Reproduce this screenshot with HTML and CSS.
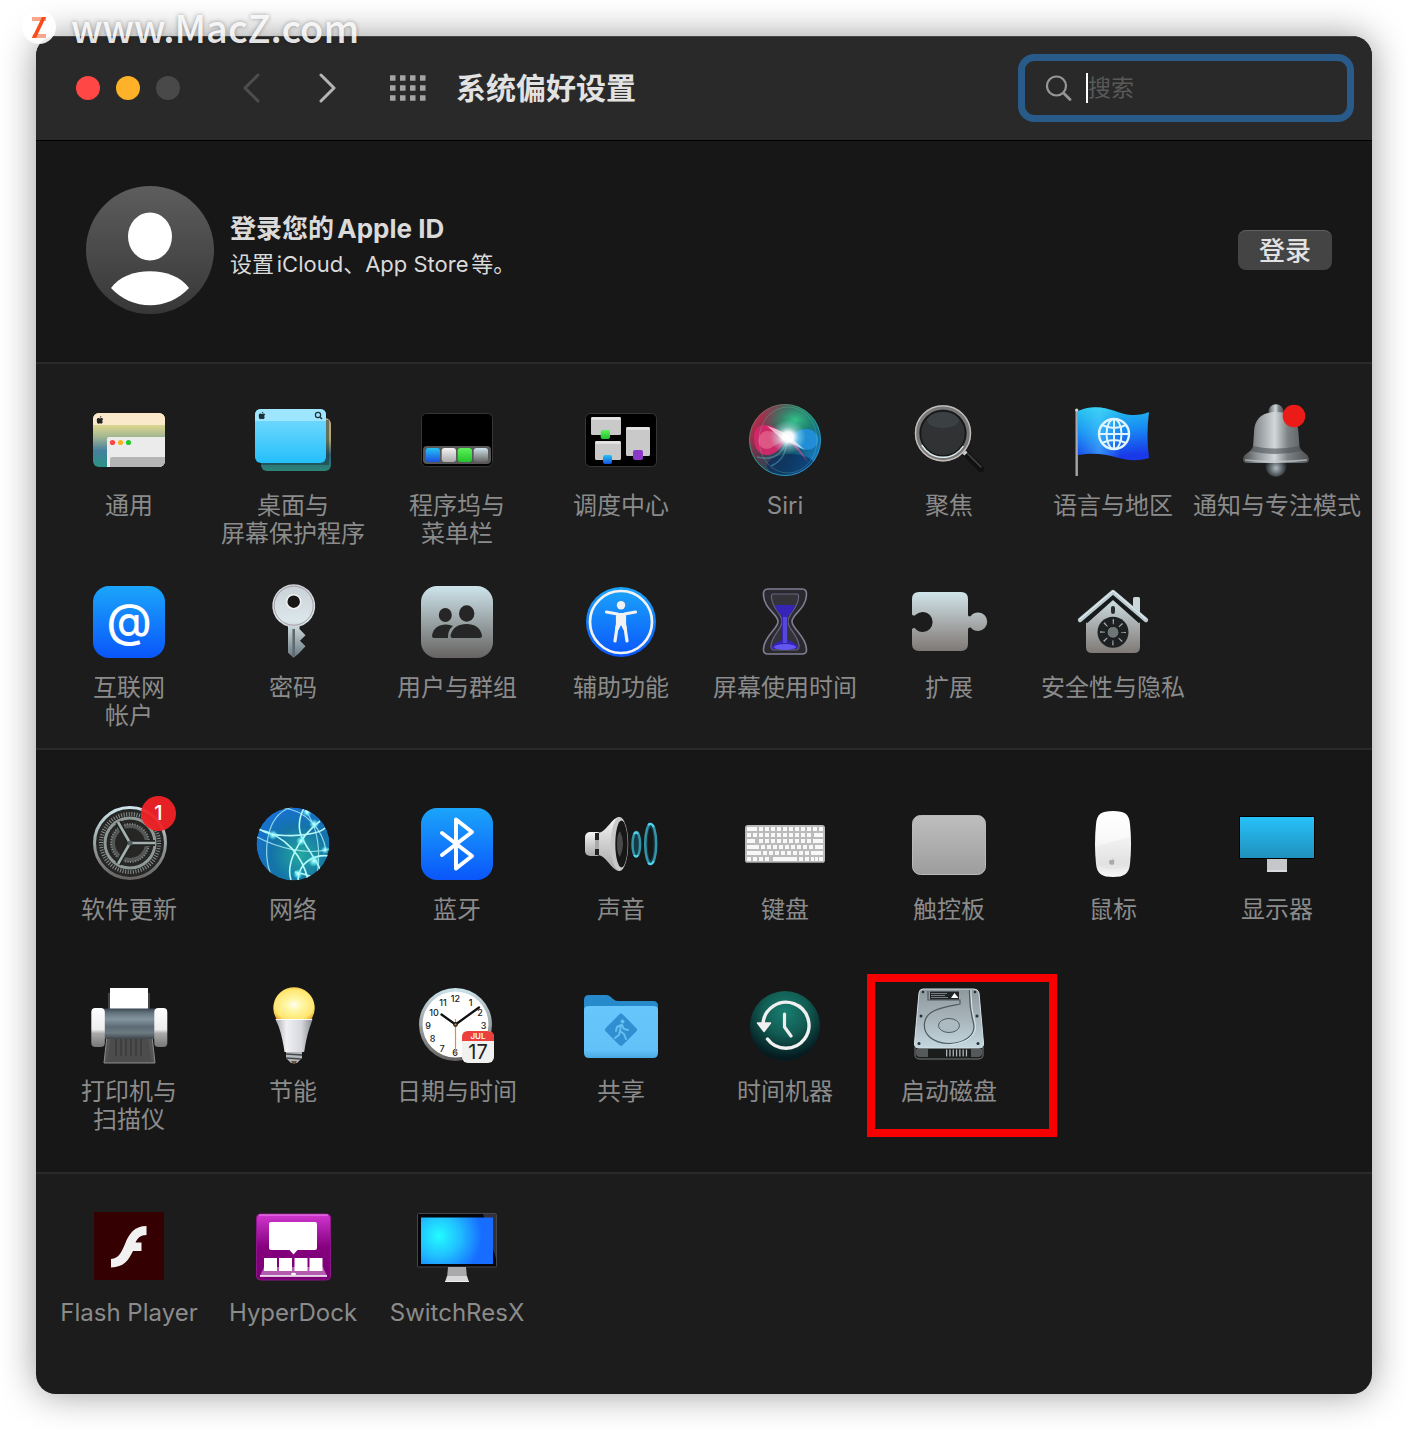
FILE: index.html
```html
<!DOCTYPE html>
<html lang="zh-CN">
<head>
<meta charset="utf-8">
<meta name="viewport" content="width=device-width, initial-scale=1">
<title>系统偏好设置</title>
<link rel="stylesheet" href="styles.css">
</head>
<body>
<svg class="defs" aria-hidden="true">
  <defs>
    <linearGradient id="blue" x1="0" y1="0" x2="0" y2="1"><stop offset="0" stop-color="#1ba5fa"/><stop offset="1" stop-color="#0a56fb"/></linearGradient>
    <linearGradient id="steel" x1="0" y1="0" x2="0" y2="1"><stop offset="0" stop-color="#cde4ec"/><stop offset=".5" stop-color="#9aa3a5"/><stop offset="1" stop-color="#666362"/></linearGradient>
    <linearGradient id="silver" x1="0" y1="0" x2="0" y2="1"><stop offset="0" stop-color="#f5f5f5"/><stop offset="1" stop-color="#a9a9a9"/></linearGradient>
    <linearGradient id="sand" x1="0" y1="0" x2="0" y2="1"><stop offset="0" stop-color="#e9dba6"/><stop offset=".25" stop-color="#d6d38f"/><stop offset=".45" stop-color="#9fb592"/><stop offset=".7" stop-color="#457f9f"/><stop offset="1" stop-color="#2b9384"/></linearGradient>
    <linearGradient id="green" x1="0" y1="0" x2="0" y2="1"><stop offset="0" stop-color="#5df25a"/><stop offset="1" stop-color="#22c32c"/></linearGradient>
    <linearGradient id="azure" x1="0" y1="0" x2="0" y2="1"><stop offset="0" stop-color="#23c4f6"/><stop offset="1" stop-color="#1b4fe0"/></linearGradient>
    <symbol id="apple" viewBox="0 0 16 18"><path d="M11 0c.2 2-1.500 3.900-3.300 3.900C7.400 2 9.200.2 11 0zM14.500 13.800c-1 1.900-2.100 3.700-3.600 3.700-1.300 0-1.700-.8-3.200-.8s-2 .8-3.200.8C2.300 17.500.3 13.300.3 10c0-3.400 2-5.400 4.200-5.400 1.400 0 2.400.9 3.400.9 1 0 2.200-1 3.900-1 1 0 2.700.5 3.600 2-3 1.800-2.600 6 -.9 7.300z"/></symbol>
  </defs>
</svg>

<div class="watermark">
  <svg class="watermark-logo" viewBox="0 0 36 36" aria-hidden="true"><circle cx="18" cy="18" r="17" fill="#fff" fill-opacity=".9"/><path d="M11 8h14v4H11zM12 25h13v4H11z" fill="#f9a58c"/><path d="M21 8h4l-10 21h-4z" fill="#fb4a18"/></svg>
  <span>www.MacZ.com</span>
</div>

<main class="window">
  <header class="titlebar">
    <div class="lights">
      <button class="light close" aria-label="关闭"></button>
      <button class="light minimize" aria-label="最小化"></button>
      <button class="light zoom" aria-label="缩放" disabled></button>
    </div>
    <nav class="history">
      <button class="tool" aria-label="后退" disabled><svg width="18" height="30" viewBox="0 0 18 30"><path d="M16 2 3 15l13 13" fill="none" stroke="#4d4d4d" stroke-width="3" stroke-linecap="round" stroke-linejoin="round"/></svg></button>
      <button class="tool" aria-label="前进"><svg width="18" height="30" viewBox="0 0 18 30"><path d="m3 2 13 13L3 28" fill="none" stroke="#b4b4b4" stroke-width="3" stroke-linecap="round" stroke-linejoin="round"/></svg></button>
    </nav>
    <button class="tool" aria-label="全部显示"><svg width="36" height="28" viewBox="0 0 36 28"><g fill="none" stroke="#a4a4a4" stroke-width="5.500" stroke-dasharray="5.500 4.500"><path d="M0 4h36M0 14h36M0 24h36"/></g></svg></button>
    <h1 class="title">系统偏好设置</h1>
    <label class="search">
      <svg width="28" height="28" viewBox="0 0 28 28" aria-hidden="true"><circle cx="11.500" cy="12" r="9.500" fill="none" stroke="#969696" stroke-width="2.200"/><path d="m18.500 19 6.500 6.500" stroke="#969696" stroke-width="2.800" stroke-linecap="round"/></svg>
      <span class="caret"></span>
      <input type="search" placeholder="搜索" aria-label="搜索">
    </label>
  </header>

  <section class="account">
    <svg class="avatar" viewBox="0 0 128 128" aria-hidden="true"><defs><linearGradient id="av" x1="0" y1="0" x2="0" y2="1"><stop offset="0" stop-color="#5d5d5d"/><stop offset="1" stop-color="#373737"/></linearGradient></defs><circle cx="64" cy="64" r="64" fill="url(#av)"/><ellipse cx="64" cy="50.500" rx="22" ry="24" fill="#fff"/><path d="M25 102C40 79.500 88 79.500 103 102C82 125 46 125 25 102z" fill="#fff"/></svg>
    <div class="account-text">
      <h2>登录您的Apple ID</h2>
      <p>设置iCloud、App Store等。</p>
    </div>
    <button class="login">登录</button>
  </section>

  <section class="panes personal">
    <button class="pane">
      <svg class="icon" viewBox="0 0 80 80"><clipPath id="gc"><rect x="4" y="13" width="72" height="54" rx="6"/></clipPath><g clip-path="url(#gc)"><path d="M4 13h72v54H4z" fill="url(#sand)"/><path d="M4 13h72v12H4z" fill="#fae9cb"/><path d="M18 69V39q0-2 2-2h57v32z" fill="#ebebeb"/><path d="M21 69V59q0-2 2-2h54v12z" fill="#b5b5b5"/></g><use href="#apple" x="7.500" y="16" width="7" height="8" fill="#222"/><circle cx="23.500" cy="42.500" r="2.600" fill="#fd4744"/><circle cx="31.500" cy="42.500" r="2.600" fill="#fdb024"/><circle cx="39.500" cy="42.500" r="2.600" fill="#29c833"/></svg>
      <span class="label">通用</span>
    </button>
    <button class="pane">
      <svg class="icon" viewBox="0 0 80 80"><defs><linearGradient id="sky" x1="0" y1="0" x2="0" y2="1"><stop offset="0" stop-color="#7fddff"/><stop offset="1" stop-color="#25bffa"/></linearGradient><linearGradient id="dk" x1="0" y1="0" x2="0" y2="1"><stop offset="0" stop-color="#c0a77e"/><stop offset=".4" stop-color="#b3a66a"/><stop offset=".7" stop-color="#315e73"/><stop offset="1" stop-color="#2c8577"/></linearGradient></defs><rect x="8" y="18" width="70" height="53" rx="6" fill="url(#dk)"/><path d="M8 63h66V20" fill="none" stroke="#143b44" stroke-opacity=".5" stroke-width="4"/><rect x="2" y="9" width="71" height="54" rx="6" fill="url(#sky)"/><path d="M2 21v-6q0-6 6-6h59q6 0 6 6v6z" fill="#9ee5ff"/><use href="#apple" x="5.500" y="11.500" width="7" height="8" fill="#1b3139"/><circle cx="65" cy="15" r="2.600" fill="none" stroke="#1b3139" stroke-width="1.200"/><path d="m67 17 2 2" stroke="#1b3139" stroke-width="1.400"/></svg>
      <span class="label">桌面与<br>屏幕保护程序</span>
    </button>
    <button class="pane">
      <svg class="icon" viewBox="0 0 80 80"><rect x="4.500" y="13.500" width="71" height="53" rx="5" fill="#000" stroke="#363636"/><rect x="6" y="46" width="68" height="18" rx="4" fill="#575757"/><rect x="8.700" y="48" width="14.300" height="14" rx="3" fill="url(#azure)"/><rect x="24.700" y="48" width="14.300" height="14" rx="3" fill="url(#silver)"/><rect x="40.700" y="48" width="14.300" height="14" rx="3" fill="url(#green)"/><rect x="56.700" y="48" width="14.300" height="14" rx="3" fill="url(#steel)"/></svg>
      <span class="label">程序坞与<br>菜单栏</span>
    </button>
    <button class="pane">
      <svg class="icon" viewBox="0 0 80 80"><rect x="4.500" y="13.500" width="71" height="53" rx="5" fill="#000" stroke="#363636"/><g fill="#c9c9c9"><rect x="10" y="17" width="30" height="18" rx="1.500"/><rect x="14" y="41" width="26" height="19" rx="1.500"/><rect x="45" y="27" width="24" height="29" rx="1.500"/></g><path d="M10.500 18.500h29M14.500 42.500h25M45.500 28.500h23" stroke="#e6e6e6" stroke-width="2.500"/><rect x="19.700" y="30" width="9.300" height="9" rx="2" fill="url(#green)"/><rect x="22" y="55" width="9" height="9" rx="2" fill="url(#azure)"/><rect x="52" y="50" width="10" height="10" rx="2" fill="#8a38c8"/></svg>
      <span class="label">调度中心</span>
    </button>
    <button class="pane">
      <svg class="icon" viewBox="0 0 80 80"><defs><radialGradient id="sr"><stop offset="0" stop-color="#fff"/><stop offset=".3" stop-color="#fff" stop-opacity=".95"/><stop offset=".6" stop-color="#cff" stop-opacity=".4"/><stop offset="1" stop-color="#9ff" stop-opacity="0"/></radialGradient><linearGradient id="sb" x1="0" y1=".2" x2="1" y2=".8"><stop offset="0" stop-color="#d5284e"/><stop offset=".35" stop-color="#4f3a4c"/><stop offset=".65" stop-color="#12556d"/><stop offset="1" stop-color="#1789dc"/></linearGradient><radialGradient id="sg" cx=".5" cy=".5" r=".5"><stop offset="0" stop-color="#35c28a"/><stop offset="1" stop-color="#1a9b6b" stop-opacity="0"/></radialGradient><linearGradient id="sedge" x1="0" y1="0" x2="1" y2="1"><stop offset="0" stop-color="#b23c50"/><stop offset=".4" stop-color="#2b9e79"/><stop offset="1" stop-color="#278df0"/></linearGradient><clipPath id="sc"><circle cx="40" cy="40" r="36"/></clipPath></defs><g clip-path="url(#sc)"><circle cx="40" cy="40" r="36" fill="url(#sb)"/><ellipse cx="50" cy="20" rx="34" ry="25" fill="url(#sg)"/><ellipse cx="46" cy="66" rx="24" ry="12" fill="#0b285a" opacity=".65"/><path d="M42 39C27 19 9 22 9 38s12 21 22 14c6-4 8-9 11-13z" fill="#d9276b" opacity=".9"/><path d="M42 39C29 29 16 28 14 38s7 14 15 8z" fill="#ee86a0" opacity=".5"/><path d="M42 39c10-12 28-14 31-1 1 13-15 18-31 1z" fill="#2491df" opacity=".9"/><path d="M12 57c20 5 27-7 30-18-1 13-4 22-16 27" fill="none" stroke="#62c5df" stroke-width="1.500" opacity=".4"/><path d="M44 41 63 62 49 41z" fill="#d84b91" opacity=".65"/><ellipse cx="43" cy="40" rx="29" ry="33" fill="none" stroke="#6fe1bb" stroke-opacity=".25"/><ellipse cx="43" cy="37" rx="18" ry="17" fill="url(#sr)"/><path d="M22 26Q36 30 44 36L60 50Q46 43 37 39z" fill="#fff" opacity=".6"/></g><circle cx="40" cy="40" r="35.500" fill="none" stroke="url(#sedge)"/></svg>
      <span class="label">Siri</span>
    </button>
    <button class="pane">
      <svg class="icon" viewBox="0 0 80 80"><path d="m58 55 14 14" stroke="#111" stroke-width="6.500" stroke-linecap="round"/><path d="m59 54 13 13" stroke="#444" stroke-width="1.600" stroke-linecap="round"/><path d="m53.500 50.500 3.500 3.500" stroke="#c5ccd3" stroke-width="4.500"/><circle cx="34" cy="33.300" r="26" fill="#303233"/><ellipse cx="34" cy="20" rx="16" ry="8" fill="#56646b" opacity=".3"/><circle cx="34" cy="33.300" r="26" fill="none" stroke="#777" stroke-width="4.500"/><circle cx="34" cy="33.300" r="27.500" fill="none" stroke="#c6c1bc" stroke-width="1.300"/><path d="M13 45A24 24 0 0 0 54 46" fill="none" stroke="#dce9ed" stroke-width="2"/><circle cx="34" cy="33.300" r="22.500" fill="none" stroke="#161818" stroke-width="1.500"/></svg>
      <span class="label">聚焦</span>
    </button>
    <button class="pane">
      <svg class="icon" viewBox="0 0 80 80"><defs><linearGradient id="fl" x1="0" y1="0" x2=".15" y2="1"><stop offset="0" stop-color="#28c9ee"/><stop offset=".5" stop-color="#188df3"/><stop offset="1" stop-color="#1938e8"/></linearGradient><linearGradient id="fs"><stop offset="0" stop-color="#58e2ff" stop-opacity="0"/><stop offset=".3" stop-color="#58e2ff" stop-opacity=".45"/><stop offset=".6" stop-color="#58e2ff" stop-opacity="0"/></linearGradient></defs><path d="M3.700 10v66" stroke="#aaa4a8" stroke-width="2.400"/><circle cx="3.700" cy="10" r="1.600" fill="#d8d4d8"/><path d="M5 11C28 1 43 14 58 15c7 .5 13-1 18-3-2 15-2 30 0 46-28 8-35-9-71-3z" fill="url(#fl)"/><path d="M5 11C28 1 43 14 58 15c7 .5 13-1 18-3-2 15-2 30 0 46-28 8-35-9-71-3z" fill="url(#fs)"/><g fill="none" stroke="#dff5ff" stroke-width="2"><circle cx="41" cy="34" r="15" stroke-width="2.400"/><ellipse cx="41" cy="34" rx="7.500" ry="15"/><path d="M41 19v30M26 34h30M29 25q12 6 24 0M29 43q12-6 24 0"/></g></svg>
      <span class="label">语言与地区</span>
    </button>
    <button class="pane">
      <svg class="icon" viewBox="0 0 80 80"><defs><linearGradient id="bl"><stop offset="0" stop-color="#4b4d4e"/><stop offset=".2" stop-color="#8a9093"/><stop offset=".48" stop-color="#d3d8da"/><stop offset=".68" stop-color="#7c8184"/><stop offset="1" stop-color="#505254"/></linearGradient><radialGradient id="cl" cx=".5" cy=".6" r=".5"><stop offset="0" stop-color="#aebac0"/><stop offset="1" stop-color="#22282b"/></radialGradient></defs><circle cx="39" cy="12" r="7.700" fill="url(#bl)"/><circle cx="39" cy="66" r="10.700" fill="url(#cl)"/><path d="M17 33c0-15 9-21 22-21s22 7 22.500 21l1 14c1 5 9 6 9.500 12q0 4-4 4H10q-4 0-4-4c.5-6 9-7 10-12z" fill="url(#bl)"/><path d="M16 46q22 5 46 0l3 5q-27 6-52 0z" fill="#4c5256" opacity=".6"/><path d="M8 60q31 3 62 0" fill="none" stroke="#c5cbce" stroke-width="1.300" opacity=".7"/><circle cx="57" cy="16" r="11.300" fill="#eb1b17"/></svg>
      <span class="label">通知与专注模式</span>
    </button>
    <button class="pane">
      <svg class="icon" viewBox="0 0 80 80"><rect x="4" y="4" width="72" height="72" rx="16" fill="url(#blue)"/><text x="40" y="55" class="at">@</text></svg>
      <span class="label">互联网<br>帐户</span>
    </button>
    <button class="pane">
      <svg class="icon" viewBox="0 0 80 80"><defs><linearGradient id="ky" x1="0" y1="0" x2="0" y2="1"><stop offset="0" stop-color="#c8d1d6"/><stop offset=".5" stop-color="#dce7eb"/><stop offset="1" stop-color="#65767d"/></linearGradient></defs><path fill-rule="evenodd" d="M35 44.500a21.500 21.500 0 1 1 11.500 0V47l6 6.300-5.500 5.400 5.500 5.600-7 7.500-5 4-5.500-5zM40.700 13a6.700 6.700 0 1 0 .1 0z" fill="url(#ky)"/><circle cx="40.700" cy="23.700" r="19.500" fill="none" stroke="#9f8c96" stroke-width=".8"/><circle cx="40.700" cy="19.700" r="7" fill="#171717" stroke="#f1f2f2" stroke-width="1.500"/><path d="M40.700 47v27" stroke="#5f696e" stroke-width="2.600"/></svg>
      <span class="label">密码</span>
    </button>
    <button class="pane">
      <svg class="icon" viewBox="0 0 80 80"><rect x="4" y="4" width="72" height="72" rx="16" fill="url(#steel)"/><g fill="#262626"><ellipse cx="28.300" cy="33" rx="6.500" ry="7"/><ellipse cx="49.700" cy="31.500" rx="7.700" ry="8.200"/><path d="M17 56q-2 0-2-2c1-8 7-11.500 14-11.500q4 0 7 1.500c-4 3-5 7-5 12zM36 56q-2.500 0-2.500-2.500c2-8 8-11.500 16-11.500s14 3.500 15.500 11.500q0 2.500-2.500 2.500z"/></g></svg>
      <span class="label">用户与群组</span>
    </button>
    <button class="pane">
      <svg class="icon" viewBox="0 0 80 80"><circle cx="40" cy="40" r="35" fill="url(#blue)"/><circle cx="40" cy="40" r="31" fill="none" stroke="#f2f2f2" stroke-width="2.700"/><circle cx="40" cy="23.300" r="4.200" fill="#f2f2f2"/><path d="m25.500 30 11 2v10l-2.500 17M54.500 30l-11 2v10l2.500 17" fill="none" stroke="#f2f2f2" stroke-width="3.200" stroke-linecap="round" stroke-linejoin="round"/><path d="M35.500 31h9v9l1.500 8h-3.500L40 43l-2.500 5H34l1.500-8z" fill="#f2f2f2"/></svg>
      <span class="label">辅助功能</span>
    </button>
    <button class="pane">
      <svg class="icon" viewBox="0 0 80 80"><path d="M23 7h34q5 0 4.500 6C61 27 47 32 47 39.500S61 54 61.500 67q.5 5-4.500 5H23q-5 0-4.500-5C19 54 33 47 33 39.500S19 27 18.500 13Q18 7 23 7z" fill="#2a2930" stroke="#817e91" stroke-width="1.600"/><path d="M28 12h24q2 0 1.500 4C53 26 43 32 43 39.500S52 52 54 63q.5 5-3 5H29q-3.500 0-3-5c2-11 11-16 11-23.500S27 26 26.500 16Q26 12 28 12z" fill="#343339" stroke="#68647d" stroke-width="1.200"/><path d="M30 23h20q-1 6-7 11v24q7 3 10 6v3H27v-3q4-4 10-6V34q-6-5-7-11z" fill="#3524b6"/><ellipse cx="40" cy="65" rx="11" ry="3" fill="#6456f1"/><path d="M40 35v26" stroke="#5546dc" stroke-width="4"/></svg>
      <span class="label">屏幕使用时间</span>
    </button>
    <button class="pane">
      <svg class="icon" viewBox="0 0 80 80"><defs><linearGradient id="pz" x1="0" y1="0" x2="0" y2="1"><stop offset="0" stop-color="#d1e5eb"/><stop offset=".55" stop-color="#a5a8a8"/><stop offset="1" stop-color="#7f7975"/></linearGradient></defs><path d="M10 10h42q7 0 7 7v16c0 2 3 2 4-.5a9.300 9.300 0 1 1 0 14.400c-1-2-4-2-4 1V62q0 7-7 7H10q-7 0-7-7V47.500c1-2 3-2 4 0a10 10 0 1 0 0-15c-1 1.500-3 1.500-4 0V17q0-7 7-7z" fill="url(#pz)"/></svg>
      <span class="label">扩展</span>
    </button>
    <button class="pane">
      <svg class="icon" viewBox="0 0 80 80"><rect x="60" y="15" width="7" height="20" rx="1.500" fill="#cbd7db"/><path d="M40 14 67 38v27q0 6-6 6H19q-6 0-6-6V38z" fill="url(#pz)"/><path d="m12 39 28-25 28 25" fill="none" stroke="#181b1c" stroke-width="6"/><path d="M7 38 40 10l33 28" fill="none" stroke="#becdd2" stroke-width="4.300" stroke-linecap="round" stroke-linejoin="round"/><path d="M7 37 40 9l33 28" fill="none" stroke="#eef7f9" stroke-width="1" stroke-linecap="round"/><rect x="38" y="24" width="4" height="8" rx="2" fill="#292d2e"/><circle cx="40" cy="50.300" r="15.500" fill="#1e2122"/><circle cx="40" cy="50.300" r="10.500" fill="none" stroke="#a5aaac" stroke-width="5" stroke-dasharray="1.200 7.047" stroke-dashoffset=".6"/><circle cx="40" cy="50.300" r="6" fill="#6f7678" stroke="#151515"/></svg>
      <span class="label">安全性与隐私</span>
    </button>
  </section>

  <section class="panes hardware">
    <button class="pane">
      <svg class="icon" viewBox="0 0 80 80"><circle cx="41" cy="39" r="36" fill="#262625"/><g fill="none"><circle cx="41" cy="39" r="35.500" stroke="url(#steel)" stroke-width="3"/><circle cx="41" cy="39" r="29" stroke="#8b9190" stroke-width="4" stroke-dasharray="1 1.600"/><circle cx="41" cy="39" r="25" stroke="#8f9998" stroke-width="3"/><circle cx="41" cy="39" r="17" stroke="#535655" stroke-width="4"/><circle cx="41" cy="39" r="19" stroke="#858b8a" stroke-width="2" stroke-dasharray="1 1.600"/><path d="M41 39h25M41 39 29 18M41 39 29 60" stroke="#202322" stroke-width="6"/><path d="M41 39h25M41 39 29 18M41 39 29 60" stroke="#a4b0b0" stroke-width="2.600"/></g><circle cx="41" cy="39" r="2.500" fill="#555e5f"/></svg>
      <span class="badge">1</span>
      <span class="label">软件更新</span>
    </button>
    <button class="pane">
      <svg class="icon" viewBox="0 0 80 80"><defs><radialGradient id="nt" cx=".6" cy=".65" r=".65"><stop offset="0" stop-color="#24a89f"/><stop offset=".6" stop-color="#1474a7"/><stop offset="1" stop-color="#1771d0"/></radialGradient><radialGradient id="nd"><stop offset="0" stop-color="#fff"/><stop offset=".35" stop-color="#8dfcff" stop-opacity=".8"/><stop offset="1" stop-color="#5fffff" stop-opacity="0"/></radialGradient><clipPath id="nc"><circle cx="40" cy="40" r="36.500"/></clipPath></defs><g clip-path="url(#nc)"><circle cx="40" cy="40" r="36.500" fill="url(#nt)"/><g fill="none" stroke="#b8f8fb" stroke-width="1.200"><path d="M39 3C9 12 11 57 18 70M4 33c19 10 50 19 72 12M30 4c22 2 40 21 43 43M52 6c13 17 16 39 12 66" stroke-opacity=".75"/><path d="M3 22c12 14 60 11 69 2M4 25c29 6 46 28 51 51M51 4c-16 31 13 42 20 72M67 17C43 36 33 61 38 76M45 76c1-18 16-26 32-24M42 68q10 2 17 5" stroke-width="1.600"/></g><g fill="url(#nd)"><circle cx="20" cy="31" r="5"/><circle cx="48" cy="37" r="5"/><circle cx="61" cy="57" r="6"/><circle cx="45" cy="70" r="5"/><circle cx="54" cy="8" r="5"/><circle cx="61" cy="20" r="5"/><circle cx="72" cy="46" r="4"/></g></g></svg>
      <span class="label">网络</span>
    </button>
    <button class="pane">
      <svg class="icon" viewBox="0 0 80 80"><rect x="4" y="4" width="72" height="72" rx="16" fill="url(#blue)"/><path d="M25 29 55 52 39 64.500V15.500L55 28 25 51" fill="none" stroke="#fff" stroke-width="4" stroke-linecap="round" stroke-linejoin="round"/></svg>
      <span class="label">蓝牙</span>
    </button>
    <button class="pane">
      <svg class="icon" viewBox="0 0 80 80"><rect x="4" y="28" width="17" height="24" rx="5" fill="url(#silver)"/><path d="M14 29h6v22h-6z" fill="#222"/><path d="M14 36h6v9h-6z" fill="#aaa"/><path d="M18 29C27 26 31 13 39 13v54c-8 0-12-13-21-16z" fill="url(#silver)"/><ellipse cx="38.500" cy="40" rx="8.700" ry="27" fill="#c8c8c8"/><ellipse cx="40.500" cy="40" rx="6.200" ry="23.500" fill="#171717"/><path d="M39 27q6 12 0 26-3-3-3-13t3-13z" fill="#4a4a4a"/><g fill="#143c46" stroke="#3494a8" stroke-width="2.500"><ellipse cx="55.300" cy="40.300" rx="3.800" ry="12.300"/><ellipse cx="69.700" cy="40" rx="5.500" ry="20"/></g><ellipse cx="69.700" cy="40" rx="3" ry="16" fill="#171717"/><path d="M67 21q3-3 6 2M67 59q3 3 6-2M53 30q2-3 4 0M53 51q2 3 4 0" stroke="#51d5ed" stroke-width="2" fill="none"/></svg>
      <span class="label">声音</span>
    </button>
    <button class="pane">
      <svg class="icon" viewBox="0 0 80 80"><rect y="21" width="80" height="38" rx="3" fill="#bbb"/><path d="M1 58.500h78" stroke="#888"/><g stroke="#f8f8f8" stroke-width="4" fill="none"><path d="M2 25h10"/><path d="M14 25h64M2 31h66M14 37h58M16 43h52M18 49h48M2 55h24" stroke-dasharray="4 2"/><path d="M69 31h9M2 37h8M72 37h6M2 43h12M70 43h8M2 49h14M66 49h12M28 55h24M54 55h4M60 55h4M66 55h3M70 55h3M74 55h4"/></g></svg>
      <span class="label">键盘</span>
    </button>
    <button class="pane">
      <svg class="icon" viewBox="0 0 80 80"><defs><linearGradient id="tp" x1="0" y1="0" x2="0" y2="1"><stop offset="0" stop-color="#bebebe"/><stop offset="1" stop-color="#9d9d9d"/></linearGradient></defs><rect x="3.500" y="11.500" width="73" height="59" rx="8" fill="url(#tp)" stroke="#b9b9b9"/></svg>
      <span class="label">触控板</span>
    </button>
    <button class="pane">
      <svg class="icon" viewBox="0 0 80 80"><defs><linearGradient id="ms" x1="0" y1="0" x2="0" y2="1"><stop offset="0" stop-color="#fff"/><stop offset=".4" stop-color="#fafafa"/><stop offset=".8" stop-color="#e4e4e5"/><stop offset="1" stop-color="#f8f8f8"/></linearGradient></defs><path d="M40 7c12 0 16 3 17 13q2 20 0 40c-1 10-6 13-17 13s-16-3-17-13q-2-20 0-40C24 10 28 7 40 7z" fill="url(#ms)"/><path d="m24 42 33-9-1 28q-17 8-32 0z" fill="#ddd" opacity=".25"/><use href="#apple" x="36" y="54" width="6" height="7" fill="#aaa"/></svg>
      <span class="label">鼠标</span>
    </button>
    <button class="pane">
      <svg class="icon" viewBox="0 0 80 80"><defs><linearGradient id="ds" x1="0" y1="0" x2="0" y2="1"><stop offset="0" stop-color="#27c2fa"/><stop offset="1" stop-color="#2090bb"/></linearGradient></defs><rect x="2.500" y="12.500" width="75" height="42" fill="url(#ds)" stroke="#000"/><path d="M30 55h20v13H30z" fill="#c6c7ca"/><path d="M30 67h20" stroke="#eee"/></svg>
      <span class="label">显示器</span>
    </button>
    <button class="pane">
      <svg class="icon" viewBox="0 0 80 80"><defs><linearGradient id="pr" x1="0" y1="0" x2="0" y2="1"><stop offset="0" stop-color="#3a4650"/><stop offset=".15" stop-color="#65757f"/><stop offset=".35" stop-color="#8595a0"/><stop offset=".6" stop-color="#5c6b75"/><stop offset=".8" stop-color="#6e7a82"/><stop offset="1" stop-color="#3d454b"/></linearGradient><linearGradient id="pw" x1="0" y1="0" x2="0" y2="1"><stop offset="0" stop-color="#fff"/><stop offset=".55" stop-color="#eee"/><stop offset=".65" stop-color="#aaa"/><stop offset="1" stop-color="#777"/></linearGradient></defs><path d="M19 7h42v18H19z" fill="#444"/><path d="M21 2h38v21H21z" fill="#fff"/><path d="m18 50-3 27h51l-3-27z" fill="#555" stroke="#8c8c8c"/><path d="m22 53-4 23h45l-4-23z" fill="#4c4c4c"/><path d="M27 53v17M32 53v17M37 53v17M42 53v17M47 53v17M52 53v17" stroke="#363636" stroke-width="1.200"/><path d="M15 22.500h51V53H15z" fill="url(#pr)"/><rect x="2.300" y="22" width="13.500" height="39" rx="4" fill="url(#pw)"/><rect x="65.300" y="22" width="13" height="39" rx="4" fill="url(#pw)"/></svg>
      <span class="label">打印机与<br>扫描仪</span>
    </button>
    <button class="pane">
      <svg class="icon" viewBox="0 0 80 80"><defs><radialGradient id="bu" cx=".5" cy=".55" r=".6"><stop offset="0" stop-color="#fffef3"/><stop offset=".3" stop-color="#fff7a8"/><stop offset=".8" stop-color="#ffe66f"/><stop offset="1" stop-color="#eaa92c"/></radialGradient><linearGradient id="bc"><stop offset="0" stop-color="#a4a7ac"/><stop offset=".3" stop-color="#f1f1f4"/><stop offset=".7" stop-color="#d6d7dc"/><stop offset="1" stop-color="#85898f"/></linearGradient></defs><path d="M23.500 33a20.700 20.700 0 1 1 35 0z" fill="url(#bu)"/><path d="M22.300 33h37.400l-2.500 7c-3 8-5 19-6 26H31.500c-1-7-3-18-6-26z" fill="url(#bc)"/><path d="M23 33.500h36" stroke="#fff" stroke-width="1.200"/><path d="M33 66h16v6l-5 5h-6l-5-5z" fill="#b4b6b9"/><path d="m33 68 16 1M33 72l15 1" stroke="#43484b" stroke-width="1.300"/><path d="m38 75 2 3h2l2-3z" fill="#66513b"/></svg>
      <span class="label">节能</span>
    </button>
    <button class="pane">
      <svg class="icon" viewBox="0 0 80 80"><circle cx="38.500" cy="38.500" r="36.500" fill="url(#steel)"/><circle cx="38.500" cy="38.500" r="33" fill="#fff"/><g class="clock-face"><text x="38.500" y="15.500">12</text><text x="53.500" y="19.500">1</text><text x="63" y="29.500">2</text><text x="66.500" y="42.500">3</text><text x="38" y="69.500">6</text><text x="25" y="65.500">7</text><text x="15.500" y="55.500">8</text><text x="11" y="42.500">9</text><text x="17" y="29.500">10</text><text x="26" y="19.500">11</text></g><path d="M38.500 38.500 62 21.500M38.500 38.500 24.500 28.500" stroke="#111" stroke-width="2.300" stroke-linecap="round"/><path d="M38.500 33v35" stroke="#ef8b24" stroke-width="1.200"/><circle cx="38.500" cy="38.500" r="2.400" fill="#222"/><circle cx="38.500" cy="38.500" r="1" fill="#ef8b24"/><rect x="45" y="45" width="32" height="32" rx="6" fill="#f1f1ef"/><path d="M45 55v-4q0-6 6-6h20q6 0 6 6v4z" fill="#ec403d"/><text x="61" y="53" class="cal-month">JUL</text><text x="61" y="73" class="cal-day">17</text></svg>
      <span class="label">日期与时间</span>
    </button>
    <button class="pane">
      <svg class="icon" viewBox="0 0 80 80"><defs><linearGradient id="fo" x1="0" y1="0" x2="0" y2="1"><stop offset="0" stop-color="#67c6fc"/><stop offset=".85" stop-color="#62c1f7"/><stop offset="1" stop-color="#4aa9e2"/></linearGradient></defs><path d="M3 35V14q0-5 5-5h17c6 0 6 6 12 6h35q5 0 5 5v15z" fill="#278aca"/><path d="M3 24q0-4 5-4h64q5 0 5 4v43q0 5-5 5H8q-5 0-5-5z" fill="url(#fo)"/><rect x="28" y="31.700" width="24" height="24" rx="2.500" transform="rotate(45 40 43.700)" fill="#308fd0"/><circle cx="41.500" cy="35.500" r="2" fill="#66bff0"/><path d="m40 39-1 6 4 3 2 5M39 45l-1 4-4 3M40 39l-4 2-1 4M41 39l2 4 4 1" fill="none" stroke="#66bff0" stroke-width="2" stroke-linecap="round" stroke-linejoin="round"/></svg>
      <span class="label">共享</span>
    </button>
    <button class="pane">
      <svg class="icon" viewBox="0 0 80 80"><defs><radialGradient id="tm" cx=".5" cy=".3" r=".65"><stop offset="0" stop-color="#197e70"/><stop offset=".5" stop-color="#125c53"/><stop offset="1" stop-color="#051b20"/></radialGradient></defs><circle cx="40" cy="40" r="35" fill="url(#tm)"/><path d="M18 38a23 23 0 1 1 4.500 15" fill="none" stroke="#f0f0f0" stroke-width="3.400" stroke-linecap="round"/><path d="M12.500 37h13l-6.500 8.500z" fill="#f0f0f0" stroke="#f0f0f0" stroke-width="1.500" stroke-linejoin="round"/><path d="M39.500 28v13l6.500 9" fill="none" stroke="#eee" stroke-width="3.200" stroke-linecap="round" stroke-linejoin="round"/></svg>
      <span class="label">时间机器</span>
    </button>
    <button class="pane highlighted">
      <svg class="icon" viewBox="0 0 80 80"><defs><linearGradient id="hd" x1="0" y1="0" x2="0" y2="1"><stop offset="0" stop-color="#8e999e"/><stop offset=".5" stop-color="#a7b4ba"/><stop offset="1" stop-color="#c4d7df"/></linearGradient></defs><path d="M6 61h68v8q0 4-5 4H11q-5 0-5-4z" fill="#1b1c1c" stroke="#777b7d"/><path d="M7 63h12v8h-8q-4 0-4-4zM62 63h11v4q0 4-4 4h-7z" fill="#55595a"/><path d="M37 67h23" stroke="#b0b4b6" stroke-width="7" stroke-dasharray="1.300 2"/><path d="M14 3h51q4 0 5 4l4.500 50q.5 5-4.500 5H10q-5 0-4.500-5L10 7q.5-4 4-4z" fill="url(#hd)" stroke="#d5e2e7"/><path d="M60.500 4v4q0 15 4 29c3 13-10 20-24 20.500C23 57 14 48 15.500 37 17 24 32 22 51 18v-4H19V5" fill="none" stroke="#4f5a60" stroke-width="1.200"/><path d="M62 4v4q0 15 4 29c3 13-10 20-24 21.500" fill="none" stroke="#e3eef1" stroke-width=".9"/><ellipse cx="40" cy="39.500" rx="10.500" ry="7" fill="#acbbc2" stroke="#4f5b61"/><path d="M21 5.500h29v8H21z" fill="#202325"/><path d="M22 7.500h16M22 9.500h14M22 11.500h17" stroke="#8c999d" stroke-width=".8"/><path d="m42 12 3.500-5 4 5z" fill="#fff"/><g fill="#263033"><circle cx="14" cy="6" r="1.300"/><circle cx="66" cy="6" r="1.300"/><circle cx="12" cy="30" r="1.500"/><circle cx="68" cy="30" r="1.500"/><circle cx="10" cy="57.500" r="1.500"/><circle cx="69" cy="57.500" r="1.500"/></g></svg>
      <span class="label">启动磁盘</span>
    </button>
  </section>

  <section class="panes third-party">
    <button class="pane">
      <svg class="icon" viewBox="0 0 80 80"><path d="M5 5h70v68H5z" fill="#350002"/><path d="M57.500 19v9c-6 0-9 3-11 7.500h6V44H44C39 54 35 60 22 60.500V52c8-1 10-6 14-15 4-10 9-18 21.500-18z" fill="#f1f1f1"/></svg>
      <span class="label">Flash Player</span>
    </button>
    <button class="pane">
      <svg class="icon" viewBox="0 0 80 80"><defs><linearGradient id="hy" x1="0" y1="0" x2="0" y2="1"><stop offset="0" stop-color="#d138d0"/><stop offset=".5" stop-color="#85007e"/><stop offset="1" stop-color="#7b0074"/></linearGradient></defs><rect x="3.500" y="7" width="74" height="66" rx="4" fill="url(#hy)" stroke="#8c178a"/><path d="M6 8h69" stroke="#ed88eb"/><path d="M18 15h44q2 0 2 2v24q0 2-2 2H44.500l-4 4.500-4-4.500H18q-2 0-2-2V17q0-2 2-2z" fill="#fff"/><path d="M11 60h59l4 9H7z" fill="#b35caf"/><path d="M7 69h67" stroke="#fff" stroke-width="1.300"/><path d="M11 51h13v13H11zM26 51h13v13H26zM41.500 51h13v13h-13zM56.500 51h13v13h-13z" fill="#fff"/><ellipse cx="40.500" cy="67" rx="2.500" ry="1.200" fill="#fff"/></svg>
      <span class="label">HyperDock</span>
    </button>
    <button class="pane">
      <svg class="icon" viewBox="0 0 80 80"><defs><radialGradient id="sw" gradientUnits="userSpaceOnUse" cx="22" cy="29" r="43"><stop offset="0" stop-color="#22fcff"/><stop offset=".5" stop-color="#20bdff"/><stop offset="1" stop-color="#176dff"/></radialGradient></defs><rect x=".5" y="6.500" width="79" height="53.500" rx="1" fill="#05060a" stroke="#45454b"/><path d="M66 7h13v45z" fill="#30313b"/><path d="M4 10.500h72V57H4z" fill="url(#sw)"/><path d="M31 60h18l1 11H30z" fill="#aaaaad"/><path d="M30 69h20l2 6H28z" fill="#d8d8da"/><path d="M28 74.500h24" stroke="#eee"/></svg>
      <span class="label">SwitchResX</span>
    </button>
  </section>
</main>
</body>
</html>
```
FILE: styles.css
```css
*,
*::after {
  box-sizing: border-box;
}

body {
  margin: 0;
  padding: 36px;
  background: #fff;
  font-family: Inter, "Noto Sans CJK SC", sans-serif;
  text-autospace: normal;
}

button,
input {
  margin: 0;
  padding: 0;
  border: 0;
  background: none;
  color: inherit;
  font: inherit;
}

h1,
h2,
p {
  margin: 0;
}

.defs {
  position: absolute;
  width: 0;
  height: 0;
}

/* Site mark laid over the window corner */
.watermark {
  position: absolute;
  z-index: 1;
  top: 3px;
  left: 21px;
  display: flex;
  align-items: center;
  gap: 14px;
  color: rgba(255, 255, 255, 0.9);
  font: 500 38px/48px "Noto Sans CJK SC", sans-serif;
  text-shadow: 0 0 4px rgba(0, 0, 0, 0.35);
}

.watermark-logo {
  width: 36px;
  height: 36px;
}

.window {
  overflow: hidden;
  border-radius: 20px;
  background: #1c1c1c;
  box-shadow: 0 0 36px rgba(0, 0, 0, 0.4);
}

.titlebar {
  display: flex;
  align-items: center;
  height: 105px;
  padding: 0 18px 2px 40px;
  border-top: 1px solid #464646;
  border-bottom: 1px solid #000;
  background: #292929;
}

.lights {
  display: flex;
  gap: 16px;
}

.light {
  width: 24px;
  height: 24px;
  border-radius: 50%;
}

.close {
  background: #ff4845;
}

.minimize {
  background: #ffb127;
}

.zoom {
  background: #494949;
}

.history {
  display: flex;
  gap: 58px;
  margin: 0 54px 0 62px;
}

.tool {
  display: flex;
}

.title {
  margin-left: 30px;
  color: #e2e2e2;
  font-size: 30px;
  font-weight: 700;
  line-height: 40px;
}

.search {
  display: flex;
  align-items: center;
  width: 336px;
  height: 68px;
  margin-left: auto;
  padding-left: 20px;
  border: 7px solid #285b8a;
  border-radius: 16px;
}

.caret {
  width: 2px;
  height: 30px;
  margin-left: 13px;
  background: #fff;
}

.search input {
  flex: 1;
  min-width: 0;
  outline: 0;
  color: #e2e2e2;
  font-size: 23px;
  line-height: 32px;
}

.search input::placeholder {
  color: #595959;
  opacity: 1;
}

.account {
  display: flex;
  align-items: center;
  padding: 45px 40px 48px 50px;
  background: #171717;
}

.avatar {
  flex: none;
  width: 128px;
  height: 128px;
  margin-right: 16px;
}

.account-text {
  padding-bottom: 8px;
  color: #dadada;
}

.account-text h2 {
  font-size: 26px;
  font-weight: 700;
  line-height: 36px;
}

.account-text p {
  font-size: 22px;
  line-height: 34px;
}

.login {
  width: 94px;
  height: 40px;
  margin-left: auto;
  border-top: 1px solid #626262;
  border-radius: 8px;
  background: #444;
  color: #e2e2e2;
  font-size: 26px;
  font-weight: 500;
  line-height: 36px;
}

.panes {
  display: grid;
  grid-template-columns: repeat(8, minmax(0, 1fr));
  grid-auto-rows: 148px;
  row-gap: 34px;
  border-top: 2px solid #2a2a2a;
}

.personal {
  padding: 36px 13px 18px 11px;
}

.hardware {
  padding: 54px 13px 38px 11px;
  background: #171717;
}

.third-party {
  padding: 33px 13px 39px 11px;
}

.pane {
  position: relative;
  display: flex;
  flex-direction: column;
  align-items: center;
  gap: 12px;
  color: #8b8b8b;
  font-size: 24px;
  line-height: 28px;
}

.icon {
  flex: none;
  width: 80px;
  height: 80px;
  overflow: visible;
}

.label {
  white-space: nowrap;
}

.badge {
  position: absolute;
  top: -8px;
  left: calc(50% + 12px);
  width: 35px;
  height: 35px;
  border-radius: 50%;
  background: rgba(240, 34, 38, 0.95);
  color: #fff;
  font-size: 20px;
  font-weight: 500;
  line-height: 35px;
}

/* Marker frame around the pane being pointed out */
.highlighted::after {
  position: absolute;
  top: -12px;
  left: 0;
  width: 190px;
  height: 163px;
  border: 8px solid #f80000;
  content: "";
}

.at {
  fill: #fff;
  font-size: 46px;
  font-weight: 500;
  text-anchor: middle;
}

.clock-face {
  fill: #222;
  font-size: 9px;
  font-weight: 500;
  text-anchor: middle;
}

.cal-month {
  fill: #fff;
  font-size: 8px;
  font-weight: 600;
  text-anchor: middle;
}

.cal-day {
  fill: #222;
  font-size: 20px;
  text-anchor: middle;
}
```
